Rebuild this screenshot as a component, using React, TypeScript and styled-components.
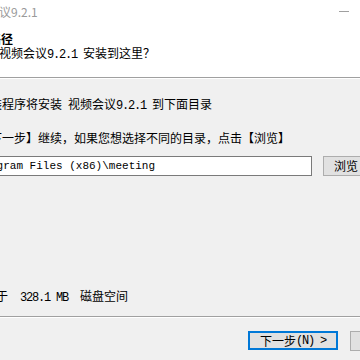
import React from "react";
import styled, { createGlobalStyle } from "styled-components";

const GlobalStyle = createGlobalStyle`
  html, body {
    margin: 0;
    padding: 0;
    width: 360px;
    height: 360px;
    overflow: hidden;
    background: #f0f0f0;
  }
  #root {
    width: 360px;
    height: 360px;
  }
`;

const Window = styled.div`
  width: 360px;
  height: 360px;
  overflow: hidden;
  display: flex;
  flex-direction: column;
  font-family: "Noto Sans CJK SC", "Noto Sans", sans-serif;
  font-size: 12px;
  line-height: 14px;
  color: #000;
  background: #f0f0f0;
`;

const TitleBar = styled.div`
  height: 24px;
  flex-shrink: 0;
  background: #fff;
  display: flex;
  align-items: center;
  justify-content: space-between;
`;

const TitleText = styled.span<{ $shift: number }>`
  margin-left: ${(p) => p.$shift}px;
  white-space: nowrap;
  color: #9a9a9a;
  font-size: 12px;
`;

const MinGlyph = styled.span`
  width: 10px;
  height: 1px;
  background: #a0a0a0;
  margin-right: 11px;
  margin-top: -1px;
`;

const Header = styled.div`
  height: 53px;
  flex-shrink: 0;
  box-sizing: border-box;
  padding-top: 8px;
  background: #fff;
  display: flex;
  flex-direction: column;
`;

const HeaderTitle = styled.div<{ $shift: number }>`
  margin-left: ${(p) => p.$shift}px;
  font-weight: 700;
  white-space: nowrap;
`;

const Line = styled.div<{ $shift: number; $top?: number }>`
  margin-left: ${(p) => p.$shift}px;
  margin-top: ${(p) => p.$top ?? 0}px;
  white-space: nowrap;
  flex-shrink: 0;
`;

const Latin = styled.span`
  font-family: "Liberation Mono", monospace;
  font-size: 12px;
  letter-spacing: -1.2px;
  white-space: pre;
`;

const FieldText = styled.span`
  font-family: "Liberation Mono", monospace;
  font-size: 11px;
  white-space: pre;
`;

const Etched = styled.div`
  height: 0;
  flex-shrink: 0;
  border-top: 1px solid #a0a0a0;
  border-bottom: 1px solid #ffffff;
`;

const Body = styled.div`
  flex: 1;
  display: flex;
  flex-direction: column;
  padding-top: 18px;
  padding-bottom: 11px;
  box-sizing: border-box;
  min-height: 0;
`;

const FieldRow = styled.div`
  display: flex;
  gap: 11px;
  margin-top: 11px;
  flex-shrink: 0;
`;

const PathField = styled.div<{ $shift: number }>`
  margin-left: ${(p) => p.$shift}px;
  width: 372px;
  height: 20px;
  flex-shrink: 0;
  box-sizing: border-box;
  border: 1px solid #7a7a7a;
  background: #fff;
  padding-left: 16px;
  display: flex;
  align-items: center;
  overflow: hidden;
  white-space: nowrap;
`;

const PushedLine = styled(Line)`
  margin-top: auto;
`;

const Footer = styled.div`
  height: 42px;
  flex-shrink: 0;
  box-sizing: border-box;
  padding-top: 13px;
  padding-left: 248px;
  display: flex;
  align-items: flex-start;
  gap: 12px;
`;

const Button = styled.div<{ $width: number; $default?: boolean }>`
  width: ${(p) => p.$width}px;
  height: ${(p) => (p.$default ? 19 : 20)}px;
  flex-shrink: 0;
  box-sizing: border-box;
  background: #e1e1e1;
  border: ${(p) => (p.$default ? "2px solid #0078d7" : "1px solid #adadad")};
  display: flex;
  align-items: center;
  justify-content: center;
  white-space: nowrap;
  color: #000;
`;

export default function App() {
  return (
    <>
      <GlobalStyle />
      <Window>
        <TitleBar>
          <TitleText $shift={-37}>视频会议9.2.1</TitleText>
          <MinGlyph />
        </TitleBar>
        <Header>
          <HeaderTitle $shift={-35}>安装路径</HeaderTitle>
          <Line $shift={-1}>
            视频会议<Latin>9.2.1 </Latin>安装到这里？
          </Line>
        </Header>
        <Etched />
        <Body>
          <Line $shift={-22}>
            安装程序将安装<Latin> </Latin>视频会议<Latin>9.2.1 </Latin>到下面目录
          </Line>
          <Line $shift={-22} $top={18}>
            【下一步】继续，如果您想选择不同的目录，点击【浏览】
          </Line>
          <FieldRow>
            <PathField $shift={-60}>
              <FieldText>C:\Program Files (x86)\meeting</FieldText>
            </PathField>
            <Button $width={46}>浏览</Button>
          </FieldRow>
          <PushedLine $shift={-16}>
            大于<Latin>  328.1 MB  </Latin>磁盘空间
          </PushedLine>
        </Body>
        <Etched />
        <Footer>
          <Button $width={90} $default>
            下一步<Latin>(N) &gt;</Latin>
          </Button>
          <Button $width={75}>取消</Button>
        </Footer>
      </Window>
    </>
  );
}
